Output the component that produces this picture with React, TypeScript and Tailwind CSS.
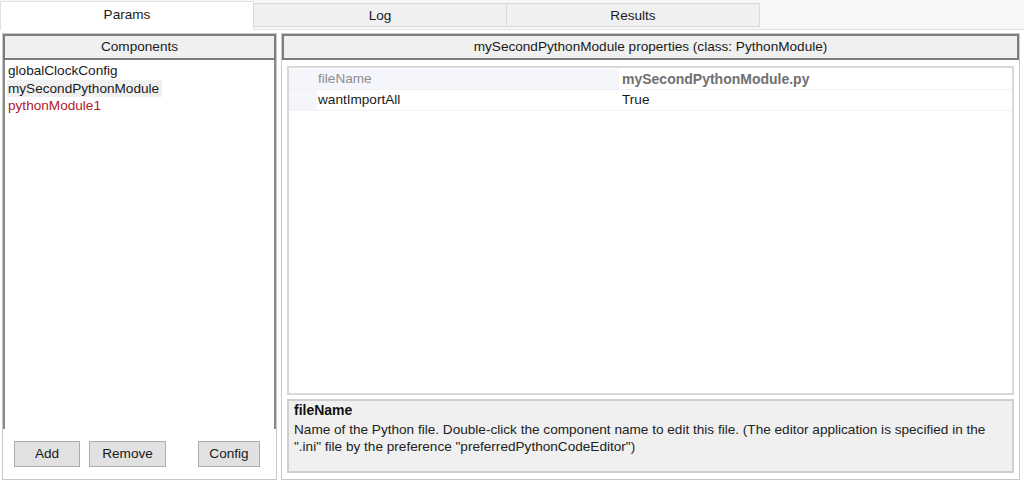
import React, { useState } from 'react'

const tabs = ['Params', 'Log', 'Results']

const components = [
  { name: 'globalClockConfig', color: 'text-[#1a1a1a]' },
  { name: 'mySecondPythonModule', color: 'text-[#1a1a1a]' },
  { name: 'pythonModule1', color: 'text-[#b3182c]' },
]

export default function App() {
  const [activeTab, setActiveTab] = useState('Params')
  const [selected, setSelected] = useState('mySecondPythonModule')

  return (
    <div
      className="w-[1024px] h-[482px] bg-white flex flex-col overflow-hidden text-[13.6px] text-[#1a1a1a]"
      style={{ fontFamily: '"Liberation Sans", Arial, sans-serif' }}
    >
      {/* tab strip */}
      <div className="h-[30px] flex items-end bg-[#f7f7f7] border-b border-[#e3e3e3]">
        {tabs.map((t) =>
          t === activeTab ? (
            <button
              key={t}
              onClick={() => setActiveTab(t)}
              className="w-[254px] h-[29px] bg-white border border-b-0 border-[#e3e3e3] -mb-px pb-[2px]"
            >
              {t}
            </button>
          ) : (
            <button
              key={t}
              onClick={() => setActiveTab(t)}
              className="w-[254px] h-[24px] mb-[2px] bg-[#f0f0f0] border border-[#dadada] -ml-px first:ml-0 pt-[2px]"
            >
              {t}
            </button>
          )
        )}
      </div>

      {/* body */}
      <div className="flex-1 flex gap-[4px] pl-[2px] pr-[4px] pt-[3px] pb-[2px]">
        {/* components panel */}
        <div className="w-[275px] flex flex-col border border-[#c8c8c8]">
          <div className="h-[26px] flex items-center justify-center bg-[#f0f0f0] border-2 border-[#7d7d7d]">
            Components
          </div>
          <div className="flex-1 bg-white border-x-2 border-[#8a8a8a] mb-[2px] pt-[2px] pl-[2px]">
            {components.map((c) => (
              <div
                key={c.name}
                onClick={() => setSelected(c.name)}
                className={`h-[17.5px] leading-[17px] pl-[1px] w-fit pr-[3px] ${c.color} ${
                  selected === c.name ? 'bg-[#f0f0f0]' : ''
                }`}
              >
                {c.name}
              </div>
            ))}
          </div>
          <div className="h-[48px] flex items-start pt-[10px] pl-[11px]">
            <button className="w-[66px] h-[26px] bg-[#e1e1e1] border border-[#adadad]">Add</button>
            <button className="w-[77px] h-[26px] ml-[9px] bg-[#e1e1e1] border border-[#adadad]">Remove</button>
            <button className="w-[62px] h-[26px] ml-[32px] bg-[#e1e1e1] border border-[#adadad]">Config</button>
          </div>
        </div>

        {/* properties panel */}
        <div className="flex-1 flex flex-col border border-[#c8c8c8]">
          <div className="h-[26px] flex items-center justify-center bg-[#f0f0f0] border-2 border-[#7d7d7d]">
            mySecondPythonModule properties (class: PythonModule)
          </div>
          <div className="flex-1 flex flex-col px-[5px] pt-[6px] pb-[6px] gap-[4px]">
            {/* property grid */}
            <div className="flex-1 bg-white border-2 border-[#d8d8d8] pt-[1px]">
              <div className="flex h-[21px] items-center border-b border-[#f0f0f0]">
                <div className="w-[330px] h-full flex items-center pl-[29px] bg-[#f4f6fb] text-[#8c8c8c]">
                  fileName
                </div>
                <div className="flex-1 h-full flex items-center pl-[3px] font-bold text-[#707070] text-[14px]">
                  mySecondPythonModule.py
                </div>
              </div>
              <div className="flex h-[21px] items-center border-b border-[#f3f3f3]">
                <div className="w-[28px] h-full bg-[#f4f6fb]" />
                <div className="w-[302px] h-full flex items-center pl-[1px]">wantImportAll</div>
                <div className="flex-1 h-full flex items-center pl-[3px]">True</div>
              </div>
            </div>
            {/* description */}
            <div className="h-[74px] bg-[#f0f0f0] border-2 border-[#cfcfcf] px-[5px] pt-[1px] leading-[17px]">
              <div className="font-bold text-[14px] text-[#111]">fileName</div>
              <div className="text-[#222] mt-[2px]">
                Name of the Python file. Double-click the component name to edit this file. (The editor application is
                specified in the
                <br />
                ".ini" file by the preference "preferredPythonCodeEditor")
              </div>
            </div>
          </div>
        </div>
      </div>
    </div>
  )
}
